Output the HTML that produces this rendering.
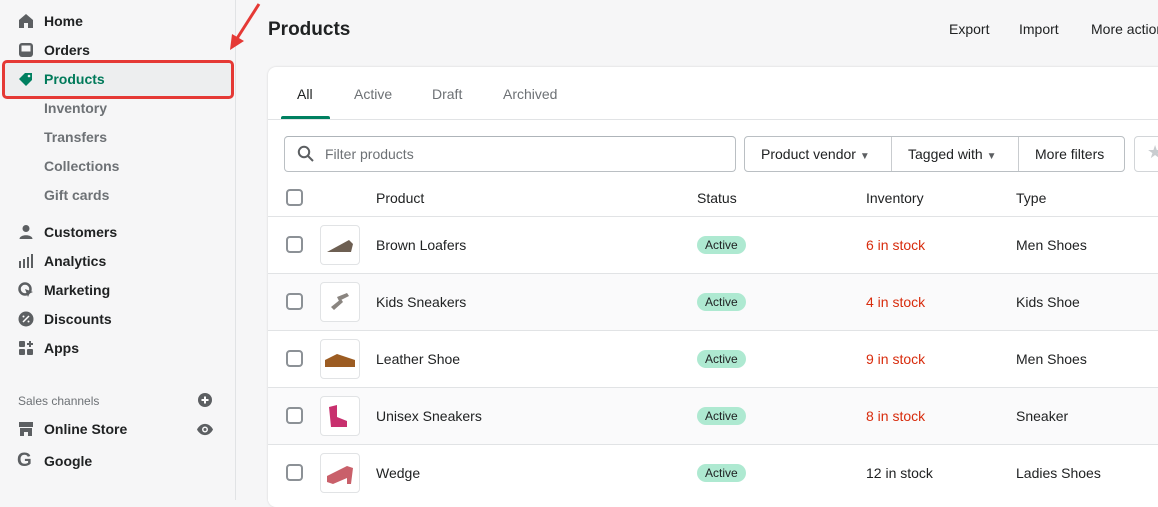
<!DOCTYPE html>
<html><head><style>
*{margin:0;padding:0;box-sizing:border-box}
body{width:1158px;height:500px;overflow:hidden;background:#f6f6f7;font-family:"Liberation Sans",sans-serif;color:#202223;position:relative;font-size:14px}
.a{position:absolute;white-space:nowrap}
.nav{left:44px;font-size:14px;font-weight:bold;color:#202223}
.sub{left:44px;font-size:14px;color:#6d7175;font-weight:bold}
.ic{position:absolute;left:18px;width:16px;height:16px}
.cb{position:absolute;left:286px;width:17px;height:17px;border:2px solid #8c9196;border-radius:4px;background:#fff}
.th{position:absolute;left:320px;width:40px;height:40px;border:1px solid #e1e3e5;border-radius:4px;background:#fff}
.badge{position:absolute;left:697px;background:#aee9d1;border-radius:10px;padding:2px 8px;font-size:12px;color:#202223}
.row{position:absolute;left:268px;width:890px;height:57px;border-top:1px solid #e1e3e5}
</style></head><body>
<div class="a" style="left:235px;top:0;width:1px;height:500px;background:#e1e3e5"></div>
<!-- sidebar -->
<svg class="ic" style="top:13px" viewBox="0 0 16 16"><path d="M8 1 L15 7 V15 H10 V10 H6 V15 H1 V7 Z" fill="#5c5f62"/></svg>
<div class="a nav" style="top:13px">Home</div>
<svg class="ic" style="top:42px" viewBox="0 0 16 16"><rect x="1" y="1" width="14" height="14" rx="3" fill="#5c5f62"/><rect x="3.5" y="3.5" width="9" height="6" fill="#f6f6f7"/></svg>
<div class="a nav" style="top:42px">Orders</div>
<div class="a" style="left:2px;top:60px;width:232px;height:39px;border:3px solid #e53935;border-radius:5px;background:#edeeef"></div>
<svg class="ic" style="top:71px" viewBox="0 0 16 16"><path d="M1 8 L7 2 H14 V9 L8 15 Z" fill="#008060"/><circle cx="11" cy="5" r="1.3" fill="#edeeef"/></svg>
<div class="a nav" style="top:71px;color:#007a5a">Products</div>
<div class="a sub" style="top:100px">Inventory</div>
<div class="a sub" style="top:129px">Transfers</div>
<div class="a sub" style="top:158px">Collections</div>
<div class="a sub" style="top:187px">Gift cards</div>
<svg class="ic" style="top:224px" viewBox="0 0 16 16"><circle cx="8" cy="4.5" r="3.5" fill="#5c5f62"/><path d="M1.5 15 C1.5 10 14.5 10 14.5 15Z" fill="#5c5f62"/></svg>
<div class="a nav" style="top:224px">Customers</div>
<svg class="ic" style="top:253px" viewBox="0 0 16 16"><g fill="#5c5f62"><rect x="1" y="8" width="2" height="7"/><rect x="5" y="6" width="2" height="9"/><rect x="9" y="4" width="2" height="11"/><rect x="13" y="1" width="2" height="14"/></g></svg>
<div class="a nav" style="top:253px">Analytics</div>
<svg class="ic" style="top:282px" viewBox="0 0 16 16"><circle cx="7" cy="7" r="5.5" fill="none" stroke="#5c5f62" stroke-width="2.5"/><path d="M7 7 L15 10 L11.5 11.5 L10 15Z" fill="#5c5f62"/></svg>
<div class="a nav" style="top:282px">Marketing</div>
<svg class="ic" style="top:311px" viewBox="0 0 16 16"><circle cx="8" cy="8" r="7.5" fill="#5c5f62"/><path d="M5 11 L11 5" stroke="#fff" stroke-width="1.5"/><circle cx="5.5" cy="5.5" r="1" fill="#fff"/><circle cx="10.5" cy="10.5" r="1" fill="#fff"/></svg>
<div class="a nav" style="top:311px">Discounts</div>
<svg class="ic" style="top:340px" viewBox="0 0 16 16"><g fill="#5c5f62"><rect x="1" y="1" width="6" height="6" rx="1"/><rect x="1" y="9" width="6" height="6" rx="1"/><rect x="9" y="9" width="6" height="6" rx="1"/><rect x="11" y="1" width="2" height="6"/><rect x="9" y="3" width="6" height="2"/></g></svg>
<div class="a nav" style="top:340px">Apps</div>
<div class="a" style="left:18px;top:394px;font-size:12px;color:#6d7175">Sales channels</div>
<svg class="a" style="left:198px;top:393px" width="14" height="14" viewBox="0 0 14 14"><circle cx="7" cy="7" r="7" fill="#5c5f62"/><path d="M7 3.5V10.5M3.5 7H10.5" stroke="#fff" stroke-width="2"/></svg>
<svg class="ic" style="top:421px" viewBox="0 0 16 16"><path d="M1 1 H15 V6 H1Z M2 7 H14 V15 H10 V11 H6 V15 H2Z" fill="#5c5f62"/></svg>
<div class="a nav" style="top:421px">Online Store</div>
<svg class="a" style="left:196px;top:423px" width="18" height="13" viewBox="0 0 18 13"><path d="M1 6.5 C5 -1 13 -1 17 6.5 C13 14 5 14 1 6.5Z" fill="#5c5f62"/><circle cx="9" cy="6.5" r="3" fill="#f6f6f7"/><circle cx="9" cy="6.5" r="1.5" fill="#5c5f62"/></svg>
<div class="a" style="left:17px;top:450px;font-size:19px;font-weight:bold;color:#5c5f62">G</div>
<div class="a nav" style="top:453px">Google</div>
<!-- arrow -->
<svg class="a" style="left:222px;top:0" width="45" height="55" viewBox="0 0 45 55"><path d="M37 4 L14 40" stroke="#e53935" stroke-width="3"/><path d="M8 50 L10 34 L22 41Z" fill="#e53935"/></svg>
<!-- header -->
<div class="a" style="left:268px;top:19px;font-size:19px;font-weight:bold">Products</div>
<div class="a" style="left:949px;top:21px;font-size:14px">Export</div>
<div class="a" style="left:1019px;top:21px;font-size:14px">Import</div>
<div class="a" style="left:1091px;top:21px;font-size:14px">More actions</div>
<!-- card -->
<div class="a" style="left:268px;top:67px;width:900px;height:440px;background:#fff;border-radius:8px;box-shadow:0 0 2px rgba(0,0,0,.15)"></div>
<div class="a" style="left:297px;top:86px;font-size:14px">All</div>
<div class="a" style="left:354px;top:86px;font-size:14px;color:#6d7175">Active</div>
<div class="a" style="left:432px;top:86px;font-size:14px;color:#6d7175">Draft</div>
<div class="a" style="left:503px;top:86px;font-size:14px;color:#6d7175">Archived</div>
<div class="a" style="left:268px;top:119px;width:890px;height:1px;background:#e1e3e5"></div>
<div class="a" style="left:281px;top:116px;width:49px;height:3px;background:#008060;border-radius:2px 2px 0 0"></div>
<!-- filters -->
<div class="a" style="left:284px;top:136px;width:452px;height:36px;border:1px solid #babfc3;border-top-color:#aeb4b9;border-radius:4px"></div>
<svg class="a" style="left:297px;top:145px" width="17" height="17" viewBox="0 0 17 17"><circle cx="7" cy="7" r="5.2" fill="none" stroke="#5c5f62" stroke-width="2"/><path d="M11 11L16 16" stroke="#5c5f62" stroke-width="2"/></svg>
<div class="a" style="left:325px;top:146px;color:#6d7175">Filter products</div>
<div class="a" style="left:744px;top:136px;width:381px;height:36px;border:1px solid #babfc3;border-radius:4px"></div>
<div class="a" style="left:891px;top:137px;width:1px;height:34px;background:#c9cccf"></div>
<div class="a" style="left:1018px;top:137px;width:1px;height:34px;background:#c9cccf"></div>
<div class="a" style="left:761px;top:146px">Product vendor <span style="font-size:10px;color:#5c5f62">&#9660;</span></div>
<div class="a" style="left:908px;top:146px">Tagged with <span style="font-size:10px;color:#5c5f62">&#9660;</span></div>
<div class="a" style="left:1035px;top:146px">More filters</div>
<div class="a" style="left:1134px;top:136px;width:40px;height:36px;border:1px solid #d2d5d8;border-radius:4px"></div>
<div class="a" style="left:1147px;top:142px;color:#c9cccf;font-size:18px">&#9733;</div>
<!-- table head -->
<div class="cb" style="top:189px"></div>
<div class="a" style="left:376px;top:190px">Product</div>
<div class="a" style="left:697px;top:190px">Status</div>
<div class="a" style="left:866px;top:190px">Inventory</div>
<div class="a" style="left:1016px;top:190px">Type</div>
<div class="row" style="top:216px;background:#fff"></div>
<div class="row" style="top:273px;background:#fafafb"></div>
<div class="row" style="top:330px;background:#fff"></div>
<div class="row" style="top:387px;background:#fafafb"></div>
<div class="row" style="top:444px;background:#fff"></div>

<div class="cb" style="top:236px"></div><div class="th" style="top:225px"><svg width="38" height="38"><path d="M6 26 L28 14 L32 18 L30 26 Z" fill="#6d5f52"/></svg></div>
<div class="a" style="left:376px;top:237px">Brown Loafers</div><div class="badge" style="top:236px">Active</div>
<div class="a" style="left:866px;top:237px;color:#d82c0d">6 in stock</div><div class="a" style="left:1016px;top:237px">Men Shoes</div>

<div class="cb" style="top:293px"></div><div class="th" style="top:282px"><svg width="38" height="38"><path d="M10 24 L20 16 L22 19 L13 27Z M16 14 L26 10 L28 13 L18 18Z" fill="#8a8580"/></svg></div>
<div class="a" style="left:376px;top:294px">Kids Sneakers</div><div class="badge" style="top:293px">Active</div>
<div class="a" style="left:866px;top:294px;color:#d82c0d">4 in stock</div><div class="a" style="left:1016px;top:294px">Kids Shoe</div>

<div class="cb" style="top:350px"></div><div class="th" style="top:339px"><svg width="38" height="38"><path d="M4 20 L16 14 L34 20 L34 27 L4 27Z" fill="#9c5c22"/></svg></div>
<div class="a" style="left:376px;top:351px">Leather Shoe</div><div class="badge" style="top:350px">Active</div>
<div class="a" style="left:866px;top:351px;color:#d82c0d">9 in stock</div><div class="a" style="left:1016px;top:351px">Men Shoes</div>

<div class="cb" style="top:407px"></div><div class="th" style="top:396px"><svg width="38" height="38"><path d="M8 10 L16 8 L16 20 L26 24 L26 30 L10 30Z" fill="#c8306e"/></svg></div>
<div class="a" style="left:376px;top:408px">Unisex Sneakers</div><div class="badge" style="top:407px">Active</div>
<div class="a" style="left:866px;top:408px;color:#d82c0d">8 in stock</div><div class="a" style="left:1016px;top:408px">Sneaker</div>

<div class="cb" style="top:464px"></div><div class="th" style="top:453px"><svg width="38" height="38"><path d="M6 22 L26 12 L32 14 L30 30 L26 30 L26 24 L12 30 L6 28Z" fill="#c9606a"/></svg></div>
<div class="a" style="left:376px;top:465px">Wedge</div><div class="badge" style="top:464px">Active</div>
<div class="a" style="left:866px;top:465px">12 in stock</div><div class="a" style="left:1016px;top:465px">Ladies Shoes</div>
</body></html>
